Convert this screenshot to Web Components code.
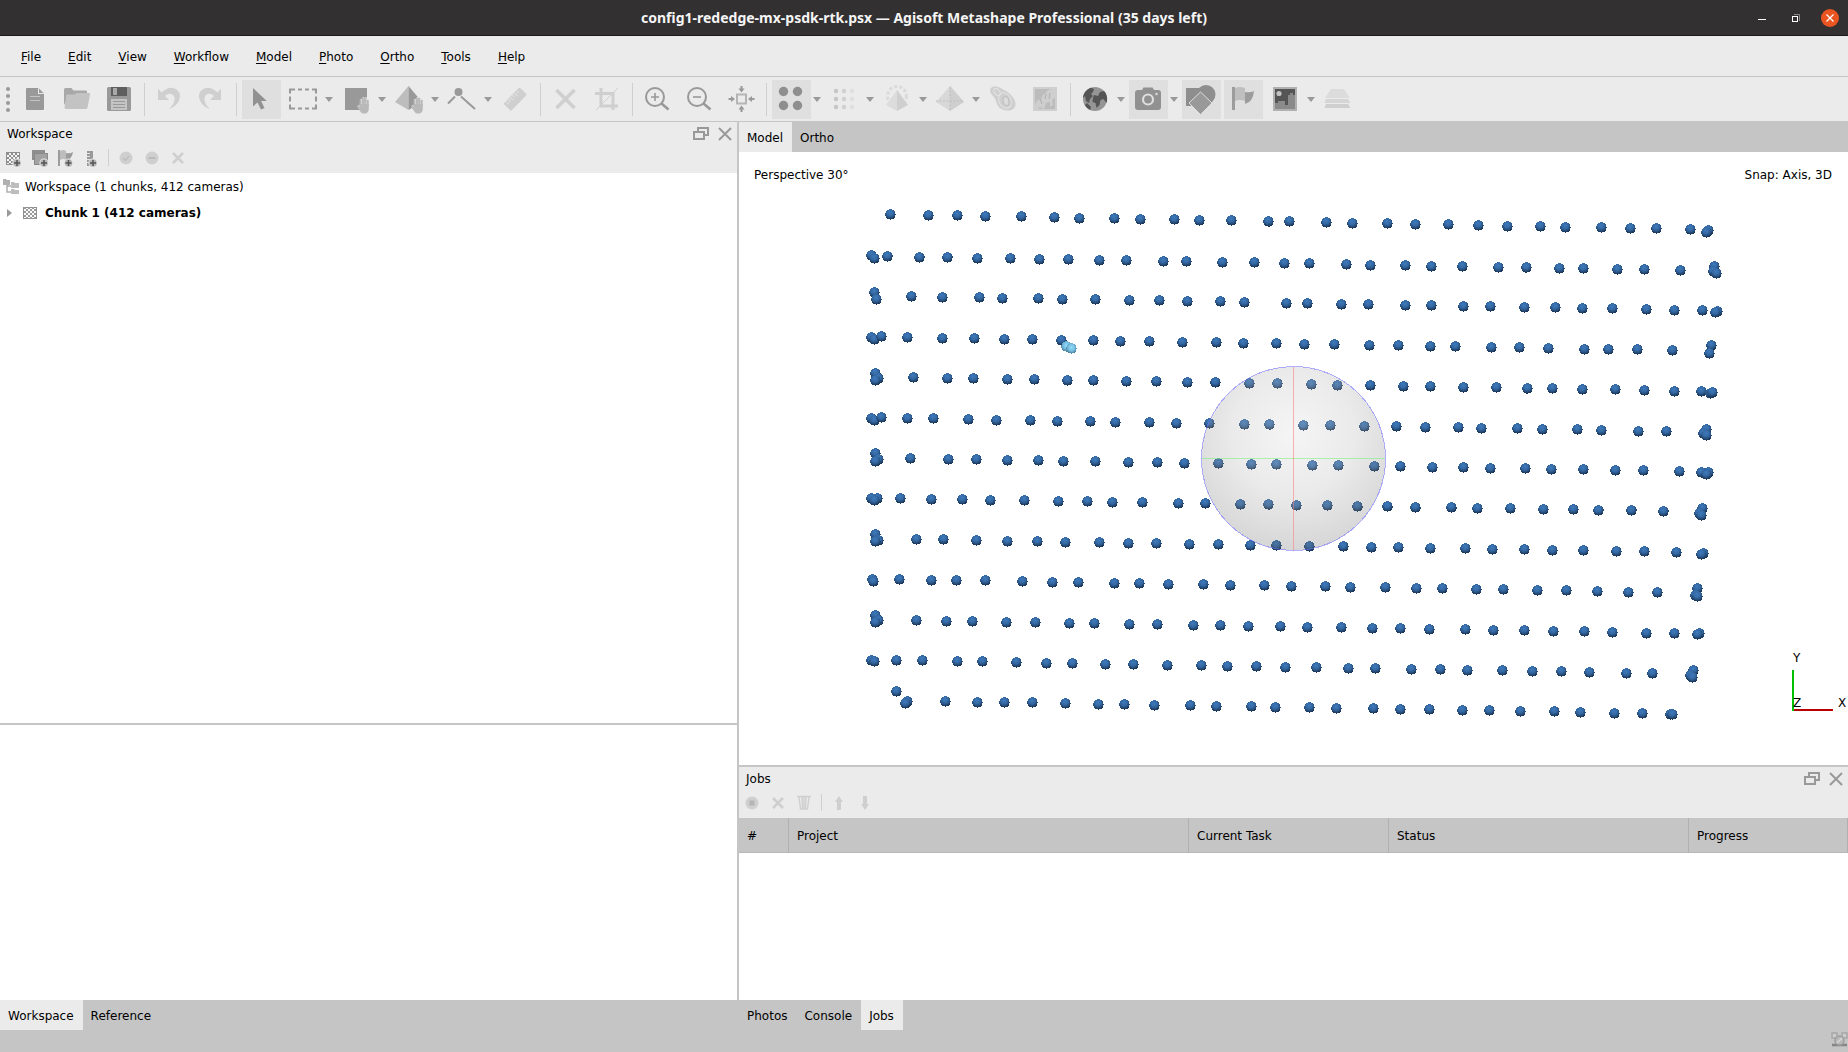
<!DOCTYPE html>
<html lang="en">
<head>
<meta charset="utf-8">
<title>config1-rededge-mx-psdk-rtk.psx — Agisoft Metashape Professional</title>
<style>
  html, body { height: 100%; }
  body { margin: 0; overflow: hidden; font: 12px/16px "DejaVu Sans", sans-serif; color: #000; }
</style>
</head>
<body>
<mt-app></mt-app>
<script>
const BASE = `*{box-sizing:border-box}button{font:inherit;color:inherit;background:none;border:0;padding:0;margin:0}`;

class MtElement extends HTMLElement {
  connectedCallback() {
    if (this.shadowRoot) return;
    this.attachShadow({ mode: 'open' }).innerHTML = `<style>${BASE}${this.css()}</style>${this.html()}`;
  }
  css() { return ''; }
  html() { return '<slot></slot>'; }
}

/* ---------- icons ---------- */
const D = '#999', M = '#b5b5b5', L = '#cfcfcf';
const hand = (x, y, c = '#b9b9b9') => `<g transform="translate(${x} ${y})"><path d="M3.5 9V3.2M6 8V1.4M8.4 8V1.6M10.8 9V3.6" stroke="${c}" stroke-width="1.9" stroke-linecap="round" fill="none"/><path d="M2.6 7h9.2v5c0 2.600-1.600 4.600-4 4.600H7C5 16.600 4 15.600 3 14L.2 10c-.3-1 .8-1.700 1.600-1L3 10.200z" fill="${c}"/></g>`;
const checker = (x, y, n, s) => { let r = ''; for (let i = 0; i < n; i++) for (let j = 0; j < n; j++) if ((i + j) % 2 === 0) r += `M${x + i * s} ${y + j * s}h${s}v${s}h${-s}z`; return r; };
const plus = (x, y) => `<circle cx="${x}" cy="${y}" r="4.600" fill="#ebebeb"/><circle cx="${x}" cy="${y}" r="3.800" fill="#b5b5b5"/><path d="M${x - 3} ${y}h6M${x} ${y - 3}v6" stroke="#555" stroke-width="1.500"/>`;
const dots = (n, x0, y0, s, r, f) => { let o = ''; for (let j = 0; j < n; j++) for (let i = 0; i < n; i++) o += `<circle cx="${x0 + i * s}" cy="${y0 + j * s}" r="${r}" fill="${f(i)}"/>`; return o; };

const ICONS = {
  new: [29, `<path d="M5 4q0-1 1-1h11l6 6v15q0 1-1 1H6q-1 0-1-1z" fill="${D}"/><path d="M17 3v6h6z" fill="#ebebeb"/><path d="M18 3.500L22.500 8H18z" fill="${D}"/><path d="M9 11.500h10M9 15.500h10" stroke="#c4c4c4" stroke-width="1"/>`],
  open: [29, `<path d="M1 4.500Q1 3 2.500 3h6l2 2.500H23q1 0 1 1.500v3H7L1 20z" fill="#a8a8a8"/><path d="M3.500 9.500h8l2-1.500H26q1.500 0 1 1.500l-2.500 13q-.3 1.500-1.800 1.500H3q-1.500 0-1.500-1.500z" fill="#c3c3c3"/>`],
  save: [29, `<rect x="2" y="2" width="24" height="24" rx="1.500" fill="${D}"/><rect x="6" y="2" width="16" height="9" fill="#5e5e5e"/><rect x="8" y="3" width="4" height="7" fill="#a9a9a9"/><rect x="6" y="14" width="16" height="11" fill="#c4c4c4"/><path d="M8 16.500h12M8 19.500h12M8 22.500h12" stroke="#999"/>`],
  undo: [29, `<path d="M3 3.500V15h11l-4-4c4-4 9-2.500 9.500 2 .3 4-2 8-5.500 11 7-2 11-8 11-13 0-7.500-10-12.500-18.500-3.500z" fill="${L}"/>`],
  redo: [29, `<path transform="matrix(-1 0 0 1 27 0)" d="M3 3.500V15h11l-4-4c4-4 9-2.500 9.500 2 .3 4-2 8-5.500 11 7-2 11-8 11-13 0-7.500-10-12.500-18.500-3.500z" fill="${L}"/>`],
  arrow: [29, `<path d="M6 3v18.500l4.500-4 3.500 7 3.500-1.600-3.400-7h5.700z" fill="#919191"/>`],
  marquee: [29, `<path d="M1 8V4h5M9 4h4M16 4h4M23 4h4v4M27 11v5M27 19v4h-4M20 23h-4M13 23H9M6 23H1v-4M1 16v-5" transform="translate(0 .5)" stroke="${D}" stroke-width="2" fill="none"/>`],
  region: [29, `<rect x="3" y="3" width="22" height="22" fill="${D}"/>${hand(15.500, 11.500, '#ebebeb')}${hand(15, 12)}`],
  pyramid: [29, `<path d="M13.500 1L0 17l13.500 8z" fill="#bdbdbd"/><path d="M13.500 1L27 17l-13.500 8z" fill="${D}"/>${hand(16.500, 11.500, '#ebebeb')}${hand(16, 12)}`],
  polyline: [29, `<circle cx="10.500" cy="7" r="4" fill="${D}"/><path d="M0 18.500L7 11.500M13 11.500L27 24" stroke="${D}" stroke-width="2" fill="none"/>`],
  ruler: [29, `<g transform="rotate(-46 14 14)"><rect x="2.500" y="9" width="23" height="10.500" rx="1.500" fill="${L}"/><path d="M6 9.500v4M9 9.500v3M12 9.500v4M15 9.500v3M18 9.500v4M21 9.500v3" stroke="#e3e3e3"/></g>`],
  cross: [29, `<path d="M5.500 5L23.500 23M23.500 5L5.500 23" stroke="${L}" stroke-width="3.600"/>`],
  crop: [29, `<path d="M8 3v18h17M2 8.500h18V25" stroke="${L}" stroke-width="3" fill="none"/><path d="M3 25L25 3" stroke="${L}" stroke-width="1"/>`],
  zoomin: [29, `<circle cx="12" cy="12" r="9" stroke="${D}" stroke-width="2" fill="none"/><path d="M18.500 18.500L25.500 24.500" stroke="${D}" stroke-width="2.600"/><path d="M8 12h8M12 8v8" stroke="${D}" stroke-width="1.600"/>`],
  zoomout: [29, `<circle cx="12" cy="12" r="9" stroke="${D}" stroke-width="2" fill="none"/><path d="M18.500 18.500L25.500 24.500" stroke="${D}" stroke-width="2.600"/><path d="M8 12h8" stroke="${D}" stroke-width="1.600"/>`],
  fit: [29, `<rect x="10" y="9.500" width="9" height="9" fill="none" stroke="${M}" stroke-width="2"/><path d="M14.500 7.500L11.500 3.500h2V1h2v2.500h2zM14.500 20.500l3 4h-2V27h-2v-2.500h-2zM8 14l-4 3v-2H1.500v-2H4v-2zM21 14l4-3v2h2.500v2H25v2z" fill="${D}"/>`],
  four: [29, dots(2, 6.500, 6.500, 14, 4.700, () => '#8e8e8e')],
  points: [29, dots(3, 6, 6, 8, 2.200, i => ['#c6c6c6', '#d0d0d0', '#dedede'][i])],
  dense: [29, `<circle cx="14" cy="11" r="9.500" fill="none" stroke="#dadada" stroke-width="3" stroke-dasharray="3 2.200"/><path d="M14 5L3 20l11 6z" fill="#dcdcdc"/><path d="M14 5l11 15-11 6z" fill="${L}"/>`],
  tetra: [29, `<path d="M14 1L0 17l14 9 14-9z" fill="#d8d8d8"/><path d="M14 1v25l14-9z" fill="${L}"/><path d="M14 2v24M0 16h28" stroke="#bdbdbd" stroke-dasharray="2 1.500"/>`],
  contour: [29, `<path d="M2 3C6-1 11 3 15 5c7 3 12 10 11.500 14.500C26 26 18 27 12.500 24 7 21 8 16 5 12 2.500 9-.5 6.500 2 3z" fill="${L}"/><ellipse cx="8" cy="7" rx="2.500" ry="4" transform="rotate(-40 8 7)" fill="none" stroke="#e2e2e2"/><ellipse cx="16" cy="15.500" rx="6" ry="8" transform="rotate(-25 16 15.500)" fill="none" stroke="#e2e2e2"/><ellipse cx="17" cy="16" rx="2.800" ry="4.500" transform="rotate(-15 17 16)" fill="#dcdcdc" stroke="#bdbdbd"/>`],
  dem: [29, `<rect x="2" y="2" width="24" height="24" fill="${L}"/><rect x="4" y="4" width="20" height="20" fill="#bcbcbc"/><path d="M4 20q2-5 4-6l2 2q1-8 4-7l2-3 4-2h4v9l-3 2 1 5-3 2v-5l-4 1-2 6-4-2-2 2H4z" fill="#cecece"/><path d="M9 14l2 5M15 9l-1 5M19 8l-1 6" stroke="#b0b0b0"/>`],
  globe: [29, `<circle cx="14" cy="14" r="12" fill="#959595"/><path d="M10 2.700C5 4.500 2 9 2 13l2-2 1 5 3 2 1-4 3-3-2-2 2-2 1-3zM6 18l-2 2c1 2 3 4 5 5l1-3zM12 13l1-3 4 1 2-4 4-1c3 3 4 8 2.500 12l-3-4-3 1-1 5-3 3-1-5-3-1z" fill="#555"/>`],
  camera: [29, `<path d="M1 8q0-3 3-3h4l1.500-2.500h9L20 5h4q3 0 3 3v14q0 3-3 3H4q-3 0-3-3z" fill="#919191"/><circle cx="14" cy="14.500" r="5" fill="none" stroke="#dedede" stroke-width="2.200"/><circle cx="22.500" cy="9" r="1.200" fill="#dedede"/>`],
  shapes: [29, `<rect x="-1" y="3" width="17" height="18" fill="#8e8e8e"/><circle cx="19" cy="9.500" r="9.500" fill="#8e8e8e"/><path d="M13.500 7L25 18 13.500 29.500 2 18z" fill="#999" stroke="#dedede" stroke-width="1"/>`],
  flag: [29, `<rect x="3" y="2" width="3" height="23" fill="#9c9c9c"/><path d="M6 3q5-2 10 0v13q-5-2-10 0z" fill="#bfbfbf"/><path d="M16 7q5 1 9-1-1 11-9 13z" fill="#9c9c9c"/>`],
  image: [29, `<rect x="2" y="2" width="24" height="24" fill="#b0b0b0"/><rect x="4" y="4" width="20" height="20" fill="#555"/><circle cx="8" cy="8.500" r="2.600" fill="#c2c2c2"/><path d="M4 18h3v-2h7v4h3V10h2V8h3v2h2v14H4z" fill="#8a8a8a"/>`],
  stack: [29, `<path d="M7 4h13l6 9H1z" fill="#dcdcdc"/><path d="M2 14h22l2.500 4H.5z" fill="#d5d5d5"/><path d="M2 19h22l2.500 4H.5z" fill="${L}"/>`],
  // 18px panel icons
  addchunk: [18, `<rect x="2.500" y="3.500" width="13" height="12" fill="#f5f5f5" stroke="#8e8e8e"/><path d="${checker(3, 4, 6, 2)}" fill="#8e8e8e"/>${plus(13, 14)}`],
  addphotos: [18, `<rect x="2" y="1" width="13" height="10" fill="#8e8e8e"/><rect x="4.500" y="4.500" width="13" height="11" fill="#a2a2a2" stroke="#8a8a8a"/>${plus(14, 14)}`],
  addflag: [18, `<path d="M2 1h2v16H2z" fill="#9c9c9c"/><path d="M4 2q3-2 6 0v9q-3-2-6 0z" fill="#bdbdbd"/><path d="M10 4q4 1 7-1-1 7-7 9z" fill="#9c9c9c"/>${plus(12.500, 14)}`],
  addscale: [18, `<path d="M5 2h6v15H5z" fill="#999"/><path d="M5 4.500h3M5 7.500h3M5 10.500h3M5 13.500h3" stroke="#e4e4e4"/>${plus(11, 14)}`],
  check: [18, `<circle cx="9" cy="9" r="6.500" fill="${L}"/><path d="M6 9l2.500 2.500L12 7" stroke="#bdbdbd" stroke-width="1.300" fill="none"/>`],
  minus: [18, `<circle cx="9" cy="9" r="6.500" fill="${L}"/><path d="M5.500 9h7" stroke="#b5b5b5" stroke-width="1.600"/>`],
  x: [18, `<path d="M4 4l10 10M14 4L4 14" stroke="${L}" stroke-width="2.600"/>`],
  stop: [18, `<circle cx="9" cy="9" r="6.500" fill="${L}"/><rect x="6.500" y="6.500" width="5" height="5" fill="#b5b5b5"/>`],
  trash: [18, `<path d="M2 2.500h14M4 3l1.500 12h7L14 3M7 3l.5 12M9 3v12M11 3l-.5 12" stroke="${L}" stroke-width="1.400" fill="none"/>`],
  up: [18, `<path d="M9 2l4 6h-2v8H7V8H5z" fill="${L}"/>`],
  down: [18, `<path d="M9 16l4-6h-2V2H7v8H5z" fill="${L}"/>`],
  tree: [18, `<path d="M1 1h3l1 1h3v5H1z" fill="#b0b0b0"/><path d="M5 7v7h4M5 8h4" stroke="#b0b0b0" stroke-width="1.500" fill="none"/><path d="M9 4h3l1 1h4v5H9zM9 11h3l1 1h4v4H9z" fill="#bdbdbd"/>`],
  chunk: [18, `<rect x="2.500" y="3.500" width="13" height="11" fill="#fafafa" stroke="#8e8e8e"/><path d="${checker(3, 3, 6, 2)}" fill="#999"/>`],
  float: [18, `<path d="M6 6V3h10v7h-4" stroke="#999" stroke-width="2" fill="none"/><rect x="2" y="7" width="10" height="7" stroke="#999" stroke-width="2" fill="none"/>`],
  close: [18, `<path d="M3 3l12 12M15 3L3 15" stroke="#999" stroke-width="2"/>`],
  net: [18, `<path d="M2 3h5v5H2zM12 3h5v5h-5z" stroke="#a6a6a6" stroke-width="1.500" fill="#ccc"/><path d="M2 15h15" stroke="#858585" stroke-width="2.500"/><circle cx="9.500" cy="10.500" r="4.500" fill="#b8b8b8" stroke="#9e9e9e" stroke-width="1.500"/><path d="M7 13l5-5" stroke="#d8d8d8" stroke-width="1.500"/>`],
  wmin: [18, `<path d="M5 10.500h8" stroke="#fff"/>`],
  wmax: [18, `<path d="M7 5.500h5.500V12" stroke="#8a8888" fill="none"/><rect x="5.500" y="7.500" width="5" height="5" stroke="#fff" stroke-width="1" fill="none"/>`],
  wclose: [18, `<circle cx="9" cy="9" r="9" fill="#e95420"/><path d="M5.500 5.500l7 7M12.500 5.500l-7 7" stroke="#fff" stroke-width="1.300"/>`],
};

customElements.define('mt-icon', class extends MtElement {
  css() { return `:host{display:block;flex:none}svg{display:block;overflow:visible}`; }
  html() {
    const [s, body] = ICONS[this.getAttribute('name')];
    return `<svg width="${s}" height="${s}" viewBox="0 0 ${s} ${s}" aria-hidden="true">${body}</svg>`;
  }
});

/* ---------- window title ---------- */
customElements.define('mt-titlebar', class extends MtElement {
  css() { return `:host{display:grid;grid-template-columns:1fr auto 1fr;align-items:center;height:36px;background:#333031;border-bottom:1px solid #1c1b1b;color:#f5f5f5}
    h1{grid-column:2;margin:0;font:bold 14px/20px "Noto Sans",sans-serif}
    nav{display:flex;justify-content:flex-end;gap:16px;padding-right:9px}`; }
  html() { return `<h1><slot></slot></h1><nav>${[['wmin', 'Minimize'], ['wmax', 'Restore'], ['wclose', 'Close']].map(([i, l]) => `<button aria-label="${l}"><mt-icon name="${i}"></mt-icon></button>`).join('')}</nav>`; }
});

/* ---------- menu bar ---------- */
customElements.define('mt-menubar', class extends MtElement {
  css() { return `:host{display:flex;align-items:center;gap:27px;height:40px;padding:2px 0 0 21px;box-sizing:border-box;background:#ebebeb}
    span{display:block}span::first-letter{text-decoration:underline;text-underline-offset:2px}`; }
  html() { return this.getAttribute('items').split(',').map(t => `<button><span>${t}</span></button>`).join(''); }
});

/* ---------- toolbar ---------- */
customElements.define('mt-tool', class extends MtElement {
  css() { return `:host{display:flex;flex:none}
    .main{display:grid;place-items:center;width:39px;height:39px}
    :host([active]) .main{background:#dfdfdf}
    .more{display:grid;place-items:center;width:11px;height:39px}
    .more::before{content:"";border:4px solid transparent;border-top:5px solid #999;border-bottom:0}`; }
  html() {
    const l = this.getAttribute('label');
    return `<button class="main" aria-label="${l}"><mt-icon name="${this.getAttribute('icon')}"></mt-icon></button>` +
      (this.hasAttribute('menu') ? `<button class="more" aria-label="${l} options"></button>` : '');
  }
});
customElements.define('mt-toolbar', class extends MtElement {
  css() { return `:host{display:flex;align-items:center;gap:3px;height:46px;box-sizing:border-box;background:#ebebeb;border-top:1px solid #c5c5c5;border-bottom:1px solid #c5c5c5}
    .grip{width:13px;height:25px;flex:none;display:flex;flex-direction:column;justify-content:space-between;align-items:center;padding-left:3px}
    .grip i{width:4px;height:4px;border-radius:2px;background:#999}
    hr{flex:none;width:1px;height:33px;margin:0 2px;border:0;background:#cfcfcf}`; }
  html() {
    const items = [['new', 'New'], ['open', 'Open'], ['save', 'Save'], 0, ['undo', 'Undo'], ['redo', 'Redo'], 0,
      ['arrow', 'Navigation', 'a'], ['marquee', 'Selection', 'm'], ['region', 'Move region', 'm'], ['pyramid', 'Move object', 'm'],
      ['polyline', 'Draw', 'm'], ['ruler', 'Ruler'], 0, ['cross', 'Delete'], ['crop', 'Crop'], 0, ['zoomin', 'Zoom in'],
      ['zoomout', 'Zoom out'], ['fit', 'Reset view'], 0, ['four', 'Tie points', 'am'], ['points', 'Point cloud', 'm'],
      ['dense', 'Dense cloud', 'm'], ['tetra', 'Model', 'm'], ['contour', 'Tiled model'], ['dem', 'DEM'], 0,
      ['globe', 'Basemap', 'm'], ['camera', 'Cameras', 'am'], ['shapes', 'Shapes', 'a'], ['flag', 'Markers', 'a'],
      ['image', 'Images', 'm'], ['stack', 'Layers']];
    return `<div class="grip"><i></i><i></i><i></i><i></i></div>` + items.map(t => t
      ? `<mt-tool icon="${t[0]}" label="${t[1]}"${(t[2] || '').includes('a') ? ' active' : ''}${(t[2] || '').includes('m') ? ' menu' : ''}></mt-tool>`
      : '<hr>').join('');
  }
});

/* ---------- dock panel: title, small toolbar, content ---------- */
customElements.define('mt-dock', class extends MtElement {
  css() { return `:host{display:flex;flex-direction:column;min-height:0;background:#fff}
    header{display:flex;align-items:center;height:24px;padding:0 3px 0 7px;background:#ebebeb}
    h2{flex:1;margin:0;font:inherit}
    header button+button{margin-left:6px}
    .tools{display:flex;align-items:center;gap:8px;height:27px;padding:0 4px 4px;background:#ebebeb}
    hr{width:1px;height:17px;margin:0;border:0;background:#cfcfcf}`; }
  html() {
    const t = this.getAttribute('tools').split(',').map(n => n === '|' ? '<hr>' : `<button aria-label="${n}"><mt-icon name="${n}"></mt-icon></button>`).join('');
    return `<header><h2>${this.getAttribute('heading')}</h2><button aria-label="Float"><mt-icon name="float"></mt-icon></button><button aria-label="Close"><mt-icon name="close"></mt-icon></button></header><div class="tools">${t}</div><slot></slot>`;
  }
});

/* ---------- tab strip ---------- */
customElements.define('mt-tabs', class extends MtElement {
  css() { return `:host{display:flex;flex:none;background:#c5c5c5}
    button{height:30px;padding:1px 9px 0 8px}
    [aria-selected=true]{background:#ebebeb}`; }
  html() {
    const sel = this.getAttribute('selected');
    return this.getAttribute('items').split(',').map(t => `<button role="tab" aria-selected="${t === sel}">${t}</button>`).join('');
  }
});

/* ---------- workspace tree ---------- */
customElements.define('mt-tree', class extends MtElement {
  css() { return `:host{display:block;padding-top:1px}
    div{display:flex;align-items:center;height:26px;padding-left:2px}
    div span{padding-left:5px}
    .child{padding-left:7px;font-weight:bold}
    .child mt-icon{margin-left:9px}
    .child span{padding-left:6px}
    .open{border:4px solid transparent;border-left:5px solid #999;border-right:0}`; }
  html() { return `<div><mt-icon name="tree"></mt-icon><span>Workspace (1 chunks, 412 cameras)</span></div>
    <div class="child"><button class="open" aria-label="Expand Chunk 1"></button><mt-icon name="chunk"></mt-icon><span>Chunk 1 (412 cameras)</span></div>`; }
});

/* ---------- 3D view ---------- */
// Each flight line: y at the first and last regular camera, then the x of every camera.
const LINES = [
  [214, 229, [890, 928, 957, 985, 1021, 1054, 1079, 1114, 1140, 1174, 1199, 1231, 1268, 1289, 1326, 1352, 1387, 1415, 1448, 1478, 1507, 1540, 1565, 1601, 1630, 1656, 1690]],
  [256, 270, [887, 919, 947, 977, 1010, 1039, 1068, 1099, 1126, 1163, 1186, 1222, 1254, 1284, 1309, 1346, 1370, 1405, 1431, 1462, 1498, 1526, 1559, 1583, 1617, 1644, 1680]],
  [296, 310, [911, 942, 979, 1002, 1038, 1062, 1095, 1129, 1159, 1187, 1220, 1244, 1286, 1307, 1341, 1368, 1405, 1431, 1463, 1490, 1524, 1555, 1582, 1612, 1646, 1674, 1702]],
  [337, 350, [907, 942, 974, 1004, 1032, 1061, 1093, 1120, 1149, 1182, 1216, 1243, 1276, 1304, 1334, 1369, 1398, 1430, 1455, 1491, 1519, 1548, 1584, 1608, 1637, 1672]],
  [377, 391, [913, 947, 973, 1007, 1034, 1067, 1093, 1126, 1156, 1187, 1215, 1249, 1277, 1311, 1337, 1370, 1403, 1430, 1463, 1496, 1527, 1552, 1582, 1615, 1644, 1674, 1701]],
  [418, 431, [907, 933, 968, 996, 1030, 1057, 1090, 1115, 1149, 1176, 1209, 1244, 1269, 1303, 1330, 1364, 1396, 1425, 1458, 1481, 1517, 1542, 1577, 1601, 1638, 1666]],
  [458, 471, [910, 948, 976, 1007, 1038, 1063, 1095, 1128, 1157, 1184, 1218, 1251, 1276, 1312, 1338, 1374, 1400, 1432, 1463, 1490, 1525, 1551, 1583, 1615, 1643, 1679]],
  [498, 511, [900, 931, 962, 990, 1024, 1058, 1087, 1112, 1142, 1178, 1205, 1240, 1268, 1296, 1327, 1357, 1387, 1415, 1451, 1477, 1510, 1543, 1573, 1598, 1631, 1663]],
  [539, 552, [916, 943, 976, 1007, 1037, 1065, 1099, 1128, 1156, 1189, 1218, 1250, 1276, 1309, 1343, 1371, 1398, 1430, 1465, 1492, 1524, 1552, 1583, 1616, 1644, 1676]],
  [579, 592, [899, 931, 956, 985, 1022, 1052, 1078, 1114, 1139, 1168, 1203, 1230, 1264, 1291, 1325, 1350, 1385, 1416, 1442, 1476, 1503, 1537, 1566, 1597, 1628, 1657]],
  [620, 633, [916, 946, 972, 1006, 1035, 1069, 1094, 1129, 1157, 1193, 1220, 1248, 1280, 1307, 1341, 1372, 1400, 1429, 1465, 1493, 1524, 1553, 1584, 1612, 1646, 1674]],
  [660, 673, [896, 922, 957, 982, 1016, 1046, 1072, 1105, 1133, 1167, 1201, 1227, 1256, 1285, 1316, 1348, 1375, 1411, 1440, 1467, 1502, 1532, 1561, 1589, 1626, 1652]],
  [701, 713, [945, 977, 1004, 1032, 1065, 1098, 1124, 1154, 1190, 1216, 1251, 1275, 1309, 1336, 1373, 1400, 1429, 1462, 1489, 1520, 1554, 1580, 1614, 1642]],
];
// Cameras bunched together where the aircraft turned.
const TURNS = [
  [1708, 230], [1706, 232], [871, 255], [874, 258], [1714, 266], [1713, 271], [1716, 273], [874, 292], [876, 299], [1717, 311], [1715, 312],
  [871, 337], [874, 339], [881, 336], [1711, 345], [1709, 353], [875, 373], [878, 378], [875, 380], [1710, 393], [1712, 392],
  [871, 418], [874, 420], [881, 417], [1706, 429], [1703, 433], [1706, 435], [875, 453], [878, 459], [875, 461], [1701, 472], [1708, 472], [1706, 474],
  [871, 498], [877, 498], [874, 500], [1702, 508], [1699, 513], [1701, 515], [875, 534], [878, 540], [875, 541], [1703, 553], [1701, 554],
  [872, 579], [873, 581], [1697, 588], [1695, 595], [1697, 596], [875, 615], [878, 620], [875, 622], [1699, 633], [1697, 634],
  [871, 660], [874, 661], [1693, 670], [1690, 675], [1692, 677], [896, 691], [907, 701], [905, 703], [1670, 714], [1672, 714],
];
customElements.define('mt-viewport', class extends MtElement {
  css() { return `:host{display:block;position:relative;flex:1;min-height:0;overflow:hidden;background:#fff}
    .scene{display:block;width:100%;height:100%}
    .hud{position:absolute;top:15px;left:15px;right:16px;display:flex;justify-content:space-between}
    .axes{position:absolute;right:0;bottom:50px;font:12px "DejaVu Sans",sans-serif}`; }
  html() {
    // Centres sit on pixel centres so that the unsmoothed discs stay round.
    const ball = (x, y, f = 'cam') => `<circle cx="${x + .5}" cy="${y + .5}" r="5.200" fill="url(#${f})"/>`;
    let s = '';
    for (const [y0, y1, xs] of LINES) {
      const a = xs[0], b = xs[xs.length - 1];
      for (const x of xs) s += ball(x, Math.round(y0 + (y1 - y0) * (x - a) / (b - a)));
    }
    for (const [x, y] of TURNS) s += ball(x, y);
    s += ball(1066, 346, 'sel') + ball(1071, 348, 'sel');
    return `<svg class="scene" viewBox="739 152 1109 613" role="img" aria-label="Camera positions">
      <defs>
        <radialGradient id="cam" cx=".45" cy=".3" r=".7"><stop offset="0" stop-color="#3e7abb"/><stop offset=".45" stop-color="#3569a4"/><stop offset="1" stop-color="#17304e"/></radialGradient>
        <radialGradient id="sel" cx=".5" cy=".4" r=".65"><stop offset="0" stop-color="#90dcfc"/><stop offset=".5" stop-color="#76bde0"/><stop offset="1" stop-color="#3f6f88"/></radialGradient>
        <radialGradient id="globe" cx=".5" cy=".36" r=".66"><stop offset="0" stop-color="#d8d8d8" stop-opacity=".26"/><stop offset=".5" stop-color="#b0b0b0" stop-opacity=".26"/><stop offset="1" stop-color="#5c5c5c" stop-opacity=".26"/></radialGradient>
      </defs><g shape-rendering="crispEdges">${s}</g>
      <circle cx="1293.500" cy="458.500" r="92" fill="url(#globe)" stroke="#7070ff" stroke-opacity=".55" shape-rendering="crispEdges"/>
      <path d="M1202 458.500h183" stroke="#80f080" stroke-opacity=".6"/><path d="M1293.500 367v183" stroke="#ff8080" stroke-opacity=".6"/>
    </svg>
    <div class="hud"><span>Perspective 30°</span><span>Snap: Axis, 3D</span></div>
    <svg class="axes" width="58" height="68" viewBox="0 0 58 68">
      <path d="M3 63h40" stroke="#b80000" stroke-width="2"/><path d="M3 23v41" stroke="#00c000" stroke-width="2"/>
      <text x="3" y="15">Y</text><text x="3" y="60">Z</text><text x="48" y="60">X</text>
    </svg>`;
  }
});

/* ---------- jobs table ---------- */
customElements.define('mt-jobs', class extends MtElement {
  css() { return `:host{display:block}
    table{width:100%;table-layout:fixed;border-collapse:separate;border-spacing:0}
    th{height:35px;padding:2px 8px 0;text-align:left;font-weight:normal;background:#c5c5c5;border-right:1px solid #b0b0b0;border-bottom:1px solid #b8b8b8}`; }
  html() { return `<table><colgroup><col width="50"><col width="400"><col width="200"><col width="300"><col></colgroup>
    <thead><tr><th>#</th><th>Project</th><th>Current Task</th><th>Status</th><th>Progress</th></tr></thead></table>`; }
});

/* ---------- application shell ---------- */
customElements.define('mt-app', class extends MtElement {
  css() { return `:host{display:flex;flex-direction:column;height:100vh;background:#c5c5c5}
    main{flex:1;min-height:0;display:grid;grid-template-columns:minmax(0,737fr) minmax(0,1109fr);column-gap:2px}
    section{display:flex;flex-direction:column;min-height:0;min-width:0}
    .ws{flex:1}
    .props{flex:none;height:275px;background:#fff;margin-top:2px}
    .jobs{flex:none;height:233px;margin-top:2px}
    footer{flex:none;height:22px;display:flex;justify-content:flex-end;align-items:flex-start}`; }
  html() { return `<mt-titlebar>config1-rededge-mx-psdk-rtk.psx — Agisoft Metashape Professional (35 days left)</mt-titlebar>
    <mt-menubar items="File,Edit,View,Workflow,Model,Photo,Ortho,Tools,Help"></mt-menubar>
    <mt-toolbar></mt-toolbar>
    <main>
      <section>
        <mt-dock class="ws" heading="Workspace" tools="addchunk,addphotos,addflag,addscale,|,check,minus,x"><mt-tree></mt-tree></mt-dock>
        <div class="props"></div>
        <mt-tabs items="Workspace,Reference" selected="Workspace"></mt-tabs>
      </section>
      <section>
        <mt-tabs items="Model,Ortho" selected="Model"></mt-tabs>
        <mt-viewport></mt-viewport>
        <mt-dock class="jobs" heading="Jobs" tools="stop,x,trash,|,up,down"><mt-jobs></mt-jobs></mt-dock>
        <mt-tabs items="Photos,Console,Jobs" selected="Jobs"></mt-tabs>
      </section>
    </main>
    <footer><mt-icon name="net"></mt-icon></footer>`; }
});
</script>
</body>
</html>
